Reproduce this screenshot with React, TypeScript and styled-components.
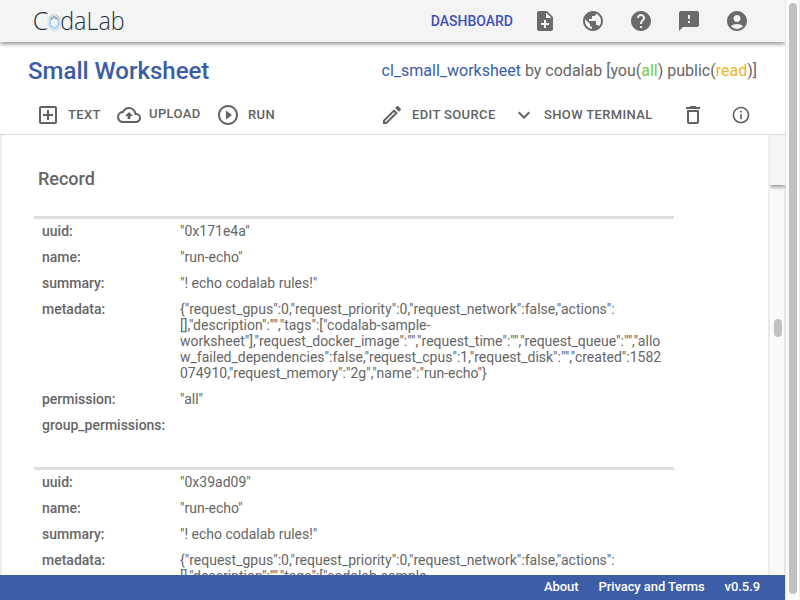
import React from 'react';
import styled, { createGlobalStyle } from 'styled-components';
import {
  MdNoteAdd, MdPublic, MdHelp, MdFeedback, MdAccountCircle, MdOutlineAddBox,
  MdOutlineCloudUpload, MdPlayCircleOutline, MdExpandMore, MdDeleteOutline, MdInfoOutline,
} from 'react-icons/md';

const GlobalStyle = createGlobalStyle`
  * { box-sizing: border-box; }
  body { margin: 0; overflow: hidden; background: #fff; color: #666; font-family: Roboto, sans-serif; }
`;

const Screen = styled.div`
  display: grid;
  grid-template-columns: 785px 15px;
  height: 600px;
  width: 800px;
`;
const Page = styled.div`
  display: grid;
  grid-template-rows: 42px 93px 440px 25px;
  min-width: 0;
  overflow: hidden;
`;
const NavBar = styled.header`
  display: flex;
  align-items: center;
  padding: 0 36px 0 32px;
  background: #f4f4f4;
  box-shadow: 0 2px 4px rgba(0, 0, 0, 0.3), 0 1px 5px rgba(0, 0, 0, 0.22);
  z-index: 1;
`;
const Logo = styled.svg`
  display: block;
  margin-right: auto;
`;
const DashboardLink = styled.a`
  color: #3f51b5;
  font-size: 14px;
  font-weight: 500;
  line-height: 24px;
  margin-right: 20px;
`;
const NavIcons = styled.nav`
  display: flex;
  gap: 24px;
  color: #6a6a6a;
  svg { display: block; }
`;
const WorksheetHeader = styled.section`
  display: grid;
  grid-template-rows: 56px 36px;
  border-bottom: 1px solid #ddd;
  background: #fff;
`;
const TitleRow = styled.div`
  display: flex;
  justify-content: space-between;
  align-items: center;
  padding: 1px 28px 0;
`;
const Title = styled.h1`
  margin: 0;
  color: #3b5ca7;
  font-size: 24px;
  font-weight: 500;
  line-height: 32px;
`;
const Owner = styled.div`
  font-size: 16px;
  line-height: 24px;
`;
const Tint = styled.span<{ $color: string }>`
  color: ${(p) => p.$color};
`;
const ToolBar = styled.div`
  display: flex;
  justify-content: space-between;
  padding: 5px 34px 0 36px;
  height: 32px;
`;
const ToolGroup = styled.div`
  display: flex;
`;
const Tool = styled.button<{ $width: number; $lift?: number }>`
  display: flex;
  align-items: center;
  gap: 8px;
  width: ${(p) => p.$width}px;
  height: 24px;
  padding: 0;
  border: 0;
  background: none;
  color: #626262;
  font: 500 13px/24px Roboto, sans-serif;
  letter-spacing: 0.37px;
  white-space: nowrap;
  svg { flex: none; }
  span { margin-top: ${(p) => -(p.$lift ?? 0)}px; }
`;
const Body = styled.main`
  display: grid;
  grid-template-columns: 770px 15px;
  min-height: 0;
`;
const Sheet = styled.div`
  overflow: hidden;
  border-left: 2px solid #ececec;
  border-right: 2px solid #ececec;
  padding: 32px 92px 0 32px;
  background: #fff;
`;
const Heading = styled.h2`
  margin: 0 4px 25px;
  font-size: 18px;
  font-weight: 500;
  line-height: 24px;
`;
const RecordTable = styled.dl`
  margin: 0 0 28px;
  width: 640px;
  border-top: 3px solid #ddd;
  font-size: 14px;
  line-height: 16px;
`;
const Field = styled.div`
  display: grid;
  grid-template-columns: 138px 486px;
  padding: 4px 8px 6px;
`;
const Key = styled.dt`
  font-weight: 500;
`;
const Value = styled.dd`
  margin: 0;
  white-space: pre;
`;
const Track = styled.div`
  display: flex;
  flex-direction: column;
  align-items: center;
  background: #fafafa;
  border-right: 1px solid #e8e8e8;
`;
const TrackCap = styled.div`
  width: 15px;
  height: 50px;
  margin-right: -1px;
  flex: none;
  background: #f4f4f4;
  box-shadow: 0 2px 4px rgba(0, 0, 0, 0.3), 0 1px 5px rgba(0, 0, 0, 0.22);
  clip-path: inset(0 0 -8px 0);
`;
const Thumb = styled.div`
  width: 8px;
  height: 18px;
  margin: 134px 0 0 1px;
  border-radius: 4px;
  background: #c1c1c1;
`;
const Footer = styled.footer`
  display: flex;
  justify-content: flex-end;
  gap: 20px;
  padding-right: 25px;
  background: #3d5ea6;
  color: #fff;
  font-size: 13px;
  font-weight: 500;
  line-height: 24px;
  letter-spacing: -0.07px;
  z-index: 1;
`;
const PageScroll = styled.div`
  padding: 3px 2px 6px 3px;
  border-left: 1px solid #e8e8e8;
  border-right: 1px solid #ededed;
  background: #fafafa;
`;
const PageThumb = styled.div`
  width: 8px;
  height: 591px;
  border-radius: 4px;
  background: #c1c1c1;
`;

const hexRadius = (angle: number) => {
  const sector = Math.PI / 3;
  const local = ((angle % sector) + sector) % sector - sector / 2;
  return 0.9 / Math.cos(local);
};

const dots = [0, 1, 2].flatMap((ring) =>
  Array.from({ length: 18 }, (_, i) => {
    const a = (i / 18) * Math.PI * 2 + Math.PI / 6 + ring * 0.17;
    const r = (4.9 + ring * 1.6) * hexRadius(a - Math.PI / 6);
    return { x: 22.3 + Math.cos(a) * r * 0.88, y: 18.6 + Math.sin(a) * r * 1.05, ring, dark: Math.sin(a) < -0.5 };
  }),
);

const CodaLabLogo = () => (
  <Logo width="96" height="38" viewBox="0 -2 96 38" fontFamily="'Open Sans', sans-serif" fontWeight="300" fontSize="25.5" fill="#1d3340">
    <text x="0.8" y="26.2" textLength="15.5" lengthAdjust="spacingAndGlyphs">C</text>
    {dots.map((d, i) => (
      <circle key={i} cx={d.x} cy={d.y} r={0.72} fill={d.dark ? '#426a86' : '#5fb0ea'} opacity={0.8 - d.ring * 0.2} />
    ))}
    <text x="28.2" y="26.2" textLength="64.5" lengthAdjust="spacingAndGlyphs">daLab</text>
  </Logo>
);

const metadata = [
  '{"request_gpus":0,"request_priority":0,"request_network":false,"actions":',
  '[],"description":"","tags":["codalab-sample-',
  'worksheet"],"request_docker_image":"","request_time":"","request_queue":"","allo',
  'w_failed_dependencies":false,"request_cpus":1,"request_disk":"","created":1582',
  '074910,"request_memory":"2g","name":"run-echo"}',
].join('\n');

const Record = ({ uuid }: { uuid: string }) => {
  const fields = [
    ['uuid:', `"${uuid}"`],
    ['name:', '"run-echo"'],
    ['summary:', '"! echo codalab rules!"'],
    ['metadata:', metadata],
    ['permission:', '"all"'],
    ['group_permissions:', ''],
  ];
  return (
    <RecordTable>
      {fields.map(([key, value]) => (
        <Field key={key}><Key>{key}</Key><Value>{value}</Value></Field>
      ))}
    </RecordTable>
  );
};

const EditIcon = () => (
  <svg width="24" height="24" viewBox="0 0 24 24" fill="currentColor">
    <path d="M14.06 9.02l.92.92L5.92 19H5v-.92l9.06-9.06M17.66 3c-.25 0-.51.1-.7.29l-1.83 1.83 3.75 3.75 1.83-1.83c.39-.39.39-1.02 0-1.41l-2.34-2.34c-.2-.2-.45-.29-.71-.29zm-3.6 3.19L3 17.25V21h3.75L17.81 9.94l-3.75-3.75z" />
  </svg>
);

export default function App() {
  return (
    <Screen>
      <GlobalStyle />
      <Page>
        <NavBar>
          <CodaLabLogo />
          <DashboardLink>DASHBOARD</DashboardLink>
          <NavIcons>
            <MdNoteAdd size={24} /><MdPublic size={24} /><MdHelp size={24} />
            <MdFeedback size={24} /><MdAccountCircle size={24} />
          </NavIcons>
        </NavBar>
        <WorksheetHeader>
          <TitleRow>
            <Title>Small Worksheet</Title>
            <Owner>
              <Tint $color="#3b5ca7">cl_small_worksheet</Tint> by codalab [you(<Tint $color="#7ac943">all</Tint>) public(<Tint $color="#f0b429">read</Tint>)]
            </Owner>
          </TitleRow>
          <ToolBar>
            <ToolGroup>
              <Tool $width={81}><MdOutlineAddBox size={24} /><span>TEXT</span></Tool>
              <Tool $width={99} $lift={2}><MdOutlineCloudUpload size={24} /><span>UPLOAD</span></Tool>
              <Tool $width={70}><MdPlayCircleOutline size={24} /><span>RUN</span></Tool>
            </ToolGroup>
            <ToolGroup>
              <Tool $width={132}><EditIcon /><span>EDIT SOURCE</span></Tool>
              <Tool $width={169}><MdExpandMore size={24} /><span>SHOW TERMINAL</span></Tool>
              <Tool $width={50}><MdDeleteOutline size={24} /></Tool>
              <Tool $width={20}><MdInfoOutline size={20} /></Tool>
            </ToolGroup>
          </ToolBar>
        </WorksheetHeader>
        <Body>
          <Sheet>
            <Heading>Record</Heading>
            <Record uuid="0x171e4a" />
            <Record uuid="0x39ad09" />
          </Sheet>
          <Track><TrackCap /><Thumb /></Track>
        </Body>
        <Footer><span>About</span><span>Privacy and Terms</span><span>v0.5.9</span></Footer>
      </Page>
      <PageScroll><PageThumb /></PageScroll>
    </Screen>
  );
}
